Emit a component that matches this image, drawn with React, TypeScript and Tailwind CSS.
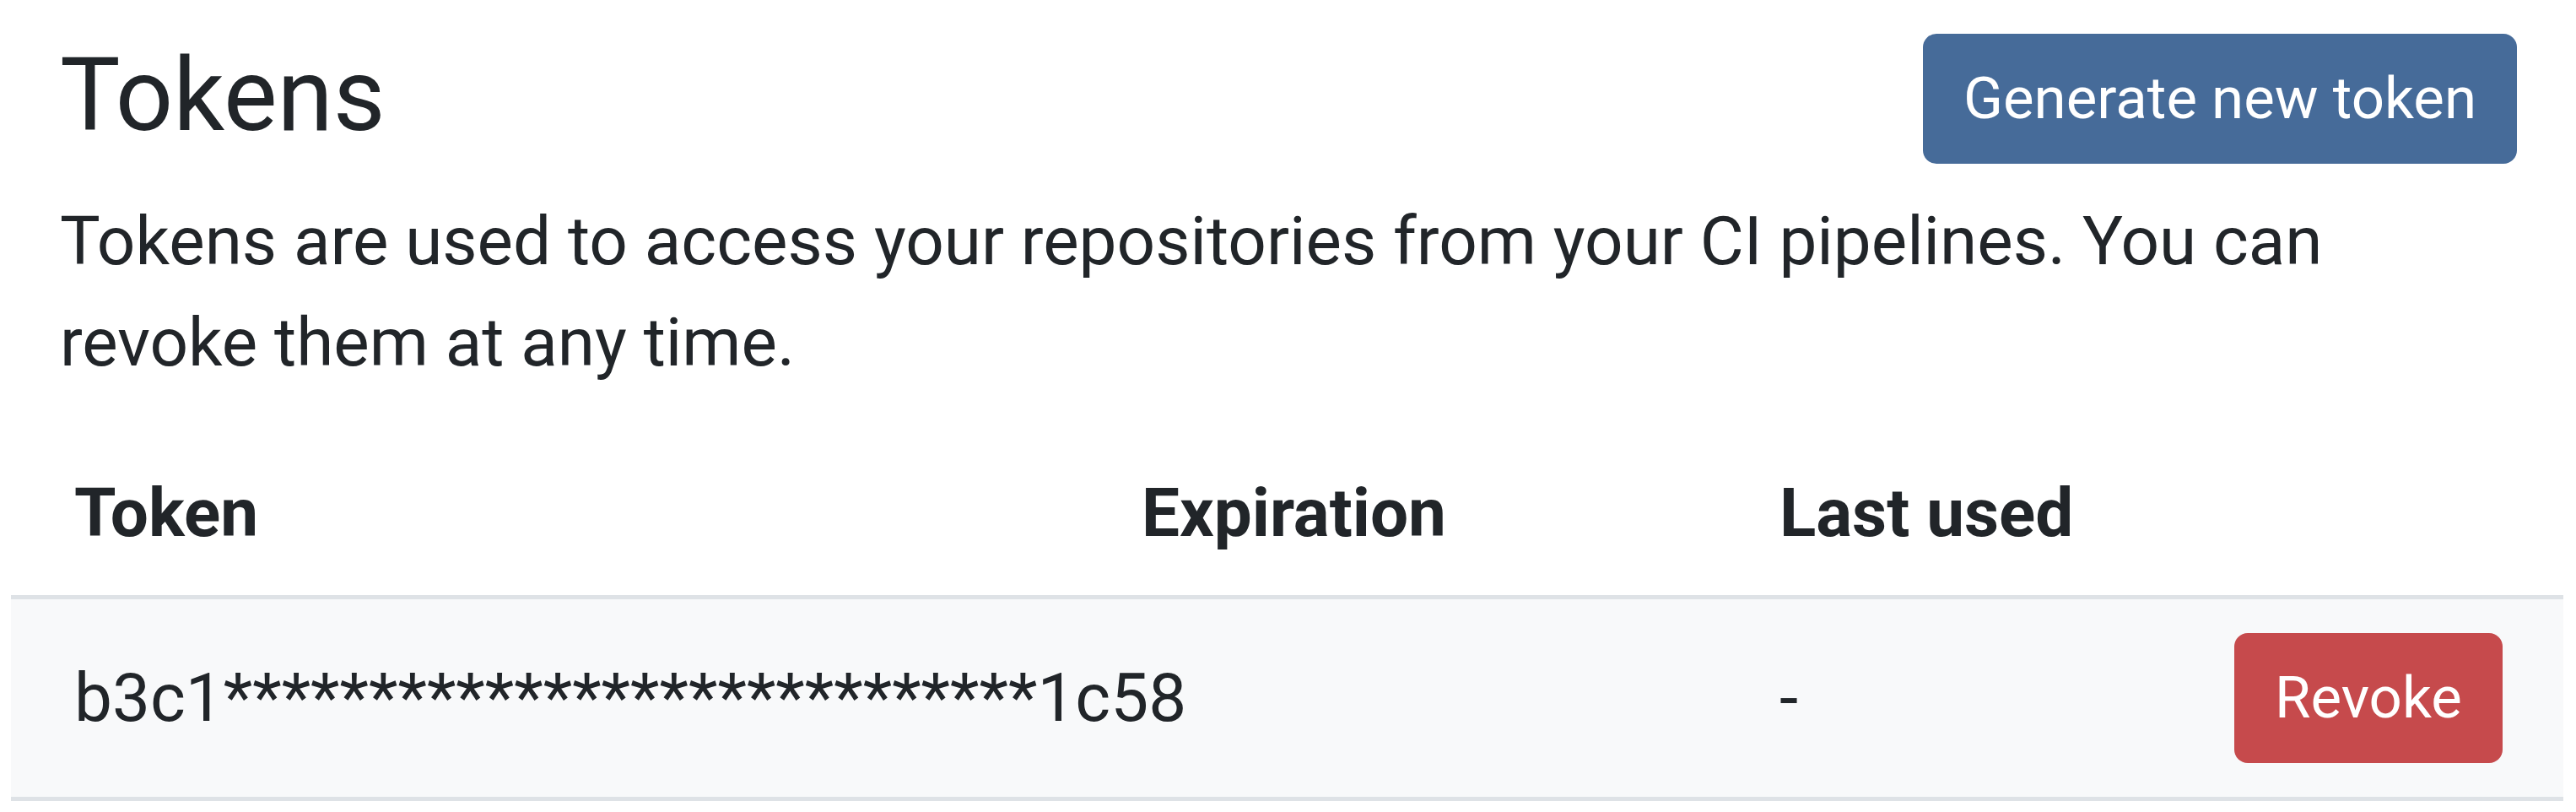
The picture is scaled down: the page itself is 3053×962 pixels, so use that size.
export default function App() {
  const token = "b3c1" + "*".repeat(28) + "1c58";
  return (
    <div className="min-h-screen bg-white pl-[13px] pr-[15px] pt-[40px] text-[#212529] font-[Roboto,'Noto_Sans',sans-serif]">
      <div className="pl-[58px] pr-[55px]">
        <div className="flex items-start justify-between">
          <h1 className="mt-[1px] text-[120px] leading-[1.2] font-normal">Tokens</h1>
          <button className="h-[154px] rounded-[16px] bg-[#466b99] px-[48px] text-[69px] leading-[1.5] text-white">
            Generate new token
          </button>
        </div>
        <p className="mt-[32px] text-[80px] leading-[1.5]">
          Tokens are used to access your repositories from your CI pipelines. You can revoke them at any time.
        </p>
      </div>
      <table className="mt-[33px] w-full table-fixed border-collapse">
        <colgroup>
          <col className="w-[1265px]" />
          <col className="w-[756px]" />
          <col className="w-[539px]" />
          <col className="w-[465px]" />
        </colgroup>
        <thead>
          <tr className="border-b-[5px] border-[#dee2e6]">
            <th className="px-[75px] pt-[49px] pb-[37px] text-left text-[80px] leading-[1.5] font-bold">Token</th>
            <th className="px-[75px] pt-[49px] pb-[37px] text-left text-[80px] leading-[1.5] font-bold">Expiration</th>
            <th className="px-[75px] pt-[49px] pb-[37px] text-left text-[80px] leading-[1.5] font-bold">Last used</th>
            <th className="px-[75px] pt-[49px] pb-[37px]"></th>
          </tr>
        </thead>
        <tbody>
          <tr className="border-b-[5px] border-[#dee2e6] bg-[#f8f9fa]">
            <td className="px-[75px] py-[40px] align-middle text-[80px] leading-[1.5] whitespace-nowrap">{token}</td>
            <td className="px-[75px] py-[40px] align-middle text-[80px] leading-[1.5]"></td>
            <td className="px-[75px] py-[40px] align-middle text-[80px] leading-[1.5]">-</td>
            <td className="px-[75px] py-[40px] align-middle text-right">
              <button className="h-[154px] rounded-[16px] bg-[#c64a4c] px-[48px] text-[69px] leading-[1.5] text-white">
                Revoke
              </button>
            </td>
          </tr>
        </tbody>
      </table>
    </div>
  );
}
